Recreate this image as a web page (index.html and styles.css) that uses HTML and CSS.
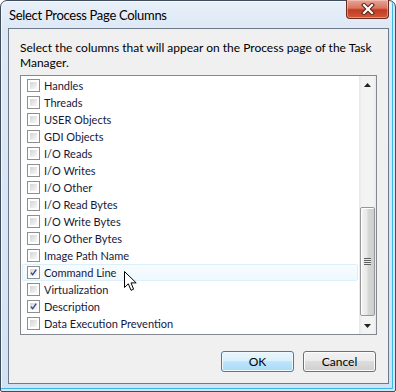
FILE: index.html
```html
<!doctype html>
<html lang="en">
<head>
  <meta charset="UTF-8">
  <title>Select Process Page Columns</title>
  <link rel="stylesheet" href="styles.css">
</head>
<body>
  <div class="window">
    <div class="titlebar">
      <span class="title">Select Process Page Columns</span>
      <div class="close">
        <svg width="14" height="12" viewBox="0 0 14 12">
          <path d="M3 2 L11 10 M11 2 L3 10" stroke="#5a2016" stroke-width="4.2" stroke-linecap="square" fill="none"/>
          <path d="M3 2 L11 10 M11 2 L3 10" stroke="#ffffff" stroke-width="2.2" stroke-linecap="square" fill="none"/>
        </svg>
      </div>
    </div>
    <div class="client">
      <p class="intro">Select the columns that will appear on the Process page of the Task Manager.</p>
      <div class="listbox">
        <ul class="items">
          <li><span class="check"></span>Handles</li>
          <li><span class="check"></span>Threads</li>
          <li><span class="check"></span>USER Objects</li>
          <li><span class="check"></span>GDI Objects</li>
          <li><span class="check"></span>I/O Reads</li>
          <li><span class="check"></span>I/O Writes</li>
          <li><span class="check"></span>I/O Other</li>
          <li><span class="check"></span>I/O Read Bytes</li>
          <li><span class="check"></span>I/O Write Bytes</li>
          <li><span class="check"></span>I/O Other Bytes</li>
          <li><span class="check"></span>Image Path Name</li>
          <li class="hot"><span class="check on"><svg width="9" height="9" viewBox="0 0 9 9"><path d="M1.2 4.6 L3.4 7.4 L8 0.8" stroke="#2c3f8f" stroke-width="1.7" fill="none"/></svg></span>Command Line</li>
          <li><span class="check"></span>Virtualization</li>
          <li><span class="check on"><svg width="9" height="9" viewBox="0 0 9 9"><path d="M1.2 4.6 L3.4 7.4 L8 0.8" stroke="#2c3f8f" stroke-width="1.7" fill="none"/></svg></span>Description</li>
          <li><span class="check"></span>Data Execution Prevention</li>
        </ul>
        <div class="scrollbar">
          <div class="arrow">
            <svg width="7" height="4" viewBox="0 0 7 4"><path d="M0 4 L3.5 0 L7 4 Z" fill="#222"/></svg>
          </div>
          <div class="track">
            <div class="thumb"><span class="grip"></span></div>
          </div>
          <div class="arrow">
            <svg width="7" height="4" viewBox="0 0 7 4"><path d="M0 0 L3.5 4 L7 0 Z" fill="#222"/></svg>
          </div>
        </div>
      </div>
      <div class="buttons">
        <button class="btn default">OK</button>
        <button class="btn">Cancel</button>
      </div>
    </div>
    <svg class="cursor" width="14" height="21" viewBox="0 0 14 21">
      <path d="M0.5 0.5 L0.5 16.5 L4.3 12.8 L7 19.3 L9.6 18.2 L7 11.9 L12.2 11.9 Z" fill="#fff" stroke="#000" stroke-width="1" stroke-linejoin="miter"/>
    </svg>
  </div>
</body>
</html>
```

FILE: styles.css
```css
*{margin:0;
  padding:0;
  list-style:none;
  box-sizing:border-box;}
body{width:396px;
     height:392px;
     overflow:hidden;
     background:#fff;
     font-family:Lato, "Liberation Sans", sans-serif;
     font-size:12px;}
.window{position:relative;
        width:396px;
        height:392px;
        border:1px solid #3f4d5c;
        border-radius:7px 7px 2px 2px;
        background:linear-gradient(to bottom, #e8f0f9 0, #dde8f5 30px, #d3e2f3 100%);
        box-shadow:inset -2px -2px 0 #d6e5f5, inset -3px -3px 0 #3cb6e3, inset 1px 1px 0 #f4f8fc;
        display:flex;
        flex-direction:column;}
.titlebar{height:27px;
          display:flex;
          align-items:flex-start;}
.title{padding:6px 0 0 8px;
       font-size:13px;
       letter-spacing:-0.3px;
       line-height:17px;
       color:#000;}
.close{margin:-1px 6px 0 auto;
       width:43px;
       height:19px;
       border:1px solid #6b2a20;
       border-top:none;
       border-radius:0 0 4px 4px;
       background:linear-gradient(to bottom, #e8a597 0, #d97660 45%, #c23b22 55%, #cf5a38 100%);
       box-shadow:inset 0 0 0 1px rgba(255,220,210,.45);
       display:flex;
       align-items:center;
       justify-content:center;}
.client{margin-left:7px;
        width:381px;
        height:356px;
        border:1px solid #6c7b8c;
        background:#f0f0f0;
        padding:11px 0 0 11px;}
.intro{width:357px;
       line-height:15px;
       color:#000;}
.listbox{margin-top:5px;
         width:357px;
         height:260px;
         border:1px solid #828790;
         background:#fff;
         display:flex;}
.items{flex:1;
       padding-top:1px;
       font-size:11px;}
.items li{height:17px;
          margin:0 1px;
          display:flex;
          align-items:center;
          padding-left:5px;
          color:#16193a;
          white-space:nowrap;}
.items li.hot{border:1px solid #dcf0fb;
              border-radius:2px;
              padding-left:4px;
              background:linear-gradient(to bottom, #f8fcfe, #eff8fd);}
.check{width:13px;
       height:13px;
       margin-right:4px;
       border:1px solid #8f8f8f;
       padding:2px;
       background:linear-gradient(135deg, #d4d4d4, #f8f8f8) content-box, #fff;
       display:flex;
       align-items:center;
       justify-content:center;}
.check svg{display:block;}
.scrollbar{width:17px;
           display:flex;
           flex-direction:column;
           background:linear-gradient(to right, #e6e6e6, #f3f3f3 3px, #f3f3f3 14px, #e9e9e9);}
.arrow{height:17px;
       display:flex;
       align-items:center;
       justify-content:center;}
.arrow svg{display:block;}
.track{flex:1;
       display:flex;
       flex-direction:column;
       justify-content:flex-end;
       padding:0 1px 1px 1px;}
.thumb{height:109px;
       border:1px solid #979797;
       border-radius:2px;
       background:linear-gradient(to right, #f4f4f4, #e8e8e8 45%, #d7d7d7 55%, #cdcdcd);
       box-shadow:inset 1px 1px 0 #fff;
       display:flex;
       align-items:center;
       justify-content:center;}
.grip{width:7px;
      height:7px;
      background:repeating-linear-gradient(to bottom, #5f5f5f 0, #5f5f5f 1px, #e9e9e9 1px, #e9e9e9 2px);}
.buttons{display:flex;
         justify-content:flex-end;
         gap:9px;
         margin-top:16px;
         padding-right:12px;}
.btn{width:73px;
     height:21px;
     border:1px solid #707070;
     border-radius:3px;
     background:linear-gradient(to bottom, #f2f2f2 0, #ebebeb 50%, #dddddd 50%, #cfcfcf 100%);
     box-shadow:inset 0 0 0 1px #fcfcfc;
     font-family:Lato, "Liberation Sans", sans-serif;
     font-size:12px;
     color:#000;}
.btn.default{border-color:#3c7fb1;
             background:linear-gradient(to bottom, #eaf6fd 0, #d9f0fc 50%, #bee6fd 50%, #a7d9f5 100%);
             box-shadow:inset 0 0 0 1px #f0fafe;}
.cursor{position:absolute;
        left:123px;
        top:270px;}
```
